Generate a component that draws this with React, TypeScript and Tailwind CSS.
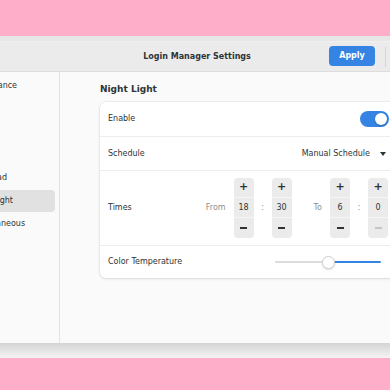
import React from 'react'

const sidebarItems = ['Appearance', 'Fonts', 'Panel', 'Users', 'Touchpad', 'Night Light', 'Miscellaneous']

function Spin({ value, minusDisabled }: { value: string; minusDisabled?: boolean }) {
  return (
    <div className="flex flex-col w-[20px] h-[60px] rounded-[4px] bg-[#ebebeb] overflow-hidden">
      <div className="h-[20px] flex items-center justify-center border-b border-[#f6f6f6] text-[11px] font-bold text-[#2e3436]">+</div>
      <div className="h-[20px] flex items-center justify-center border-b border-[#f6f6f6] text-[8px] text-[#2e3436]">{value}</div>
      <div className="flex-1 flex items-center justify-center">
        <div className={`w-[7px] h-[1.5px] ${minusDisabled ? 'bg-[#c4c4c4]' : 'bg-[#2e3436]'}`} />
      </div>
    </div>
  )
}

export default function App() {
  return (
    <div className="w-[390px] h-[390px] overflow-hidden bg-[#ffaec9] flex flex-col font-['DejaVu_Sans',sans-serif] text-[8px] text-[#2e3436]">
      <div className="h-[36px] shrink-0" />

      {/* window */}
      <div className="flex flex-col shrink-0">
        <div className="h-[6px] bg-[#e6e6e6] border-b border-[#f1f1f1]" />

        {/* header bar */}
        <div className="h-[30px] bg-[#ebebeb] border-b border-[#dcdcdc] flex items-center relative">
          <div className="flex-1 text-center font-bold text-[8px] pl-[4px]">Login Manager Settings</div>
          <div className="absolute left-[329px] top-[4px] w-[46px] h-[20px] rounded-[4px] bg-[#3584e4] text-white font-bold flex items-center justify-center">
            Apply
          </div>
          <div className="absolute left-[385px] top-[5px] w-px h-[20px] bg-[#d6d6d6]" />
        </div>

        {/* body */}
        <div className="h-[271px] flex bg-[#fafafa]">
          <div className="w-[60px] shrink-0 border-r border-[#e2e2e2] pt-[3px] pr-[4px] flex flex-col gap-px overflow-hidden">
            {sidebarItems.map((s) => (
              <div
                key={s}
                className={`h-[22px] flex items-center rounded-r-[4px] whitespace-nowrap ${s === 'Night Light' ? 'bg-[#e1e1e1]' : ''}`}
              >
                <span className="ml-[-31px]">{s}</span>
              </div>
            ))}
          </div>

          <div className="flex-1 pl-[40px] pt-[11px]">
            <div className="h-[12px] leading-[12px] font-bold text-[9px] mb-[7px]">Night Light</div>

            <div className="w-[297px] bg-white rounded-[6px] shadow-[0_0_0_1px_rgba(0,0,0,0.04),0_1px_3px_rgba(0,0,0,0.1)] flex flex-col">
              <div className="h-[35px] border-b border-[#ececec] flex items-center justify-between pl-[8px] pr-[8px]">
                <span>Enable</span>
                <div className="w-[29px] h-[16px] rounded-full bg-[#3584e4] flex items-center justify-end pr-[2px]">
                  <div className="w-[12px] h-[12px] rounded-full bg-white shadow-[0_1px_2px_rgba(0,0,0,0.25)]" />
                </div>
              </div>

              <div className="h-[34px] border-b border-[#ececec] flex items-center justify-between pl-[8px] pr-[11px]">
                <span>Schedule</span>
                <div className="flex items-center gap-[10px]">
                  <span>Manual Schedule</span>
                  <svg width="6" height="4" viewBox="0 0 6 4">
                    <path d="M0 0 L6 0 L3 4 Z" fill="#2e3436" />
                  </svg>
                </div>
              </div>

              <div className="h-[75px] border-b border-[#ececec] flex items-center justify-between pl-[8px] pr-[9px]">
                <span>Times</span>
                <div className="flex items-center">
                  <span className="text-[#8f8f8f] mr-[8px]">From</span>
                  <Spin value="18" />
                  <span className="w-[18px] text-center text-[#8f8f8f]">:</span>
                  <Spin value="30" />
                  <span className="text-[#8f8f8f] ml-[22px] mr-[8px]">To</span>
                  <Spin value="6" />
                  <span className="w-[18px] text-center text-[#8f8f8f]">:</span>
                  <Spin value="0" minusDisabled />
                </div>
              </div>

              <div className="h-[32px] flex items-center justify-between pl-[8px] pr-[16px]">
                <span>Color Temperature</span>
                <div className="w-[106px] flex items-center">
                  <div className="w-[48px] h-[2px] bg-[#dcdcdc] rounded-l-full" />
                  <div className="w-[13px] h-[13px] rounded-full bg-white border border-[#d0d0d0] shadow-[0_1px_2px_rgba(0,0,0,0.15)] -mx-[1px] relative" />
                  <div className="flex-1 h-[2px] bg-[#3584e4] rounded-r-full" />
                </div>
              </div>
            </div>
          </div>
        </div>

        <div className="h-[15px] bg-gradient-to-b from-[#d4d4d4] to-[#f4f4f4]" />
      </div>
    </div>
  )
}
